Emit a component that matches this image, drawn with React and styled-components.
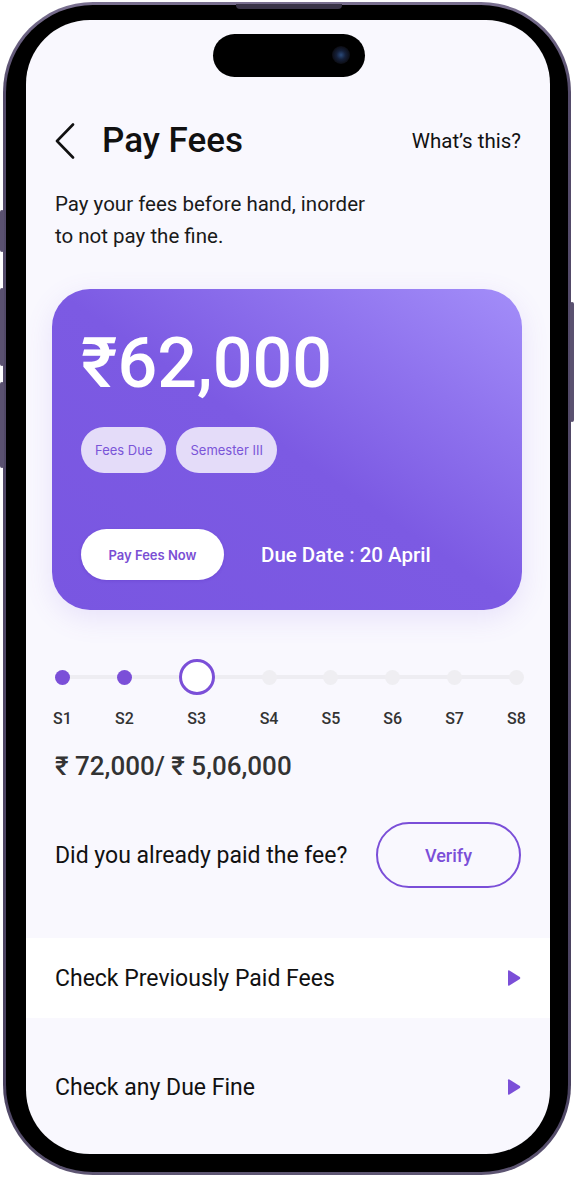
import styled, { createGlobalStyle } from 'styled-components';

const GlobalStyle = createGlobalStyle`
  html, body {
    margin: 0;
    padding: 0;
    background: #ffffff;
  }
  * {
    box-sizing: border-box;
  }
`;

const PURPLE = '#7b4fd8';

const Page = styled.div`
  width: 574px;
  height: 1178px;
  padding: 2px 0 0 3px;
  font-family: Roboto, 'Liberation Sans', sans-serif;
`;

const Frame = styled.div`
  position: relative;
  width: 568px;
  height: 1173px;
  border-radius: 90px;
  padding: 3px;
  background: linear-gradient(180deg, #7a7090 0%, #544b6a 8%, #4a4260 92%, #5e5673 100%);
`;

const SideButton = styled.div`
  position: absolute;
  top: ${(p) => p.$top}px;
  ${(p) => (p.$right ? 'right: -3px;' : 'left: -3px;')}
  width: 4px;
  height: ${(p) => p.$height}px;
  border-radius: 2px;
  background: #5a5170;
`;

const Speaker = styled.div`
  position: absolute;
  top: 2px;
  left: 233px;
  width: 106px;
  height: 5px;
  border-radius: 0 0 4px 4px;
  background: #3a3448;
`;

const Bezel = styled.div`
  width: 100%;
  height: 100%;
  border-radius: 87px;
  background: #000;
  padding: 15px 18px 18px 20px;
`;

const Screen = styled.div`
  position: relative;
  width: 100%;
  height: 100%;
  border-radius: 64px;
  background: #f9f8fe;
  overflow: hidden;
  padding-top: 103px;
  color: #111111;
`;

const Island = styled.div`
  position: absolute;
  top: 14px;
  left: 187px;
  width: 152px;
  height: 43px;
  border-radius: 22px;
  background: #000;
`;

const Camera = styled.div`
  position: absolute;
  top: 12px;
  left: 119px;
  width: 18px;
  height: 18px;
  border-radius: 50%;
  background: radial-gradient(circle, #2a4a7a 0%, #15203a 35%, #0c0d14 70%);
`;

const Content = styled.div`
  padding: 0 29px;
`;

const Header = styled.div`
  display: flex;
  align-items: center;
  height: 36px;
`;

const BackIcon = styled.svg`
  width: 20px;
  height: 36px;
  margin-right: 27px;
  flex-shrink: 0;
`;

const Title = styled.h1`
  margin: 0;
  font-size: 35px;
  font-weight: 500;
  line-height: 36px;
  color: #111;
`;

const HelpLink = styled.span`
  margin-left: auto;
  font-size: 20.5px;
  color: #111;
`;

const Subtitle = styled.p`
  margin: 29px 0 0;
  font-size: 20.5px;
  line-height: 32px;
  color: #1a1a1a;
`;

const Card = styled.div`
  margin: 37px -1px 0 -3px;
  padding: 39px 29px 30px;
  border-radius: 38px;
  background: linear-gradient(to bottom left, #a38ef9 0%, #8f73ee 25%, #7c5ae3 50%, #7956e1 100%);
  box-shadow: 0 8px 28px rgba(124, 90, 227, 0.14);
  color: #fff;
`;

const Amount = styled.div`
  font-size: 70px;
  font-weight: 500;
  line-height: 70px;
`;

const ChipRow = styled.div`
  display: flex;
  gap: 10px;
  margin-top: 29px;
`;

const Chip = styled.span`
  display: inline-flex;
  align-items: center;
  height: 46px;
  padding: 0 14px;
  border-radius: 23px;
  background: #e4dcf9;
  color: #7a55d8;
  font-family: Inter, 'Liberation Sans', sans-serif;
  font-size: 13px;
`;

const CardFooter = styled.div`
  display: flex;
  align-items: center;
  margin-top: 56px;
`;

const PayButton = styled.button`
  width: 143px;
  height: 51px;
  border: none;
  border-radius: 26px;
  background: #fff;
  color: #7a4fd4;
  font-family: Inter, 'Liberation Sans', sans-serif;
  font-size: 13px;
  font-weight: 600;
  box-shadow: 0 1px 3px rgba(80, 40, 180, 0.25);
`;

const DueDate = styled.span`
  margin-left: 37px;
  font-size: 20.5px;
  font-weight: 500;
`;

const Stepper = styled.div`
  position: relative;
  display: flex;
  justify-content: space-between;
  margin: 49px -3px 0 0;

  &::before {
    content: '';
    position: absolute;
    left: 7px;
    right: 7px;
    top: 16px;
    height: 4px;
    background: #eeedf2;
  }
`;

const Step = styled.div`
  position: relative;
  display: flex;
  flex-direction: column;
  align-items: center;
  width: ${(p) => (p.$current ? 36 : 15)}px;
`;

const DotSlot = styled.div`
  display: flex;
  align-items: center;
  justify-content: center;
  height: 36px;
`;

const Dot = styled.div`
  width: ${(p) => (p.$current ? 36 : 15)}px;
  height: ${(p) => (p.$current ? 36 : 15)}px;
  border-radius: 50%;
  background: ${(p) => (p.$current ? '#fff' : p.$done ? PURPLE : '#efeef2')};
  border: ${(p) => (p.$current ? `3px solid ${PURPLE}` : 'none')};
`;

const StepLabel = styled.span`
  margin-top: 14px;
  font-size: 16px;
  line-height: 20px;
  font-weight: 500;
  color: #333;
  white-space: nowrap;
`;

const Total = styled.div`
  margin-top: 21px;
  font-size: 26px;
  line-height: 32px;
  font-weight: 500;
  color: #333;
`;

const VerifyRow = styled.div`
  display: flex;
  align-items: center;
  justify-content: space-between;
  margin-top: 40px;
`;

const Question = styled.span`
  font-size: 23px;
  color: #111;
`;

const VerifyButton = styled.button`
  width: 145px;
  height: 66px;
  border: 2px solid ${PURPLE};
  border-radius: 33px;
  background: transparent;
  color: ${PURPLE};
  font-family: Roboto, 'Liberation Sans', sans-serif;
  font-size: 18px;
  font-weight: 500;
`;

const LinkRow = styled.div`
  display: flex;
  align-items: center;
  justify-content: space-between;
  height: 80px;
  padding: 0 29px;
  margin-top: ${(p) => p.$gap}px;
  background: ${(p) => (p.$filled ? '#ffffff' : 'transparent')};
  font-size: 23px;
  color: #111;
`;

const Arrow = styled.svg`
  width: 14px;
  height: 18px;
`;

const steps = [
  { label: 'S1', done: true },
  { label: 'S2', done: true },
  { label: 'S3', current: true },
  { label: 'S4' },
  { label: 'S5' },
  { label: 'S6' },
  { label: 'S7' },
  { label: 'S8' },
];

function PlayArrow() {
  return (
    <Arrow viewBox="0 0 14 18">
      <path d="M1 2.2 Q1 0.6 2.4 1.4 L12.8 8 Q13.9 9 12.8 10 L2.4 16.6 Q1 17.4 1 15.8 Z" fill={PURPLE} />
    </Arrow>
  );
}

export default function App() {
  return (
    <Page>
      <GlobalStyle />
      <Frame>
        <SideButton $top={208} $height={42} />
        <SideButton $top={286} $height={78} />
        <SideButton $top={380} $height={86} />
        <SideButton $right $top={300} $height={120} />
        <Speaker />
        <Bezel>
          <Screen>
            <Island>
              <Camera />
            </Island>
            <Content>
              <Header>
                <BackIcon viewBox="0 0 20 36">
                  <path d="M18 1.5 L2 18 L18 34.5" fill="none" stroke="#111" strokeWidth="2.6" strokeLinecap="round" strokeLinejoin="round" />
                </BackIcon>
                <Title>Pay Fees</Title>
                <HelpLink>What’s this?</HelpLink>
              </Header>
              <Subtitle>
                Pay your fees before hand, inorder
                <br />
                to not pay the fine.
              </Subtitle>
              <Card>
                <Amount>₹62,000</Amount>
                <ChipRow>
                  <Chip>Fees Due</Chip>
                  <Chip>Semester III</Chip>
                </ChipRow>
                <CardFooter>
                  <PayButton>Pay Fees Now</PayButton>
                  <DueDate>Due Date : 20 April</DueDate>
                </CardFooter>
              </Card>
              <Stepper>
                {steps.map((s) => (
                  <Step key={s.label} $current={s.current}>
                    <DotSlot>
                      <Dot $current={s.current} $done={s.done} />
                    </DotSlot>
                    <StepLabel>{s.label}</StepLabel>
                  </Step>
                ))}
              </Stepper>
              <Total>₹ 72,000/ ₹ 5,06,000</Total>
              <VerifyRow>
                <Question>Did you already paid the fee?</Question>
                <VerifyButton>Verify</VerifyButton>
              </VerifyRow>
            </Content>
            <LinkRow $filled $gap={50}>
              Check Previously Paid Fees
              <PlayArrow />
            </LinkRow>
            <LinkRow $gap={29}>
              Check any Due Fine
              <PlayArrow />
            </LinkRow>
          </Screen>
        </Bezel>
      </Frame>
    </Page>
  );
}
